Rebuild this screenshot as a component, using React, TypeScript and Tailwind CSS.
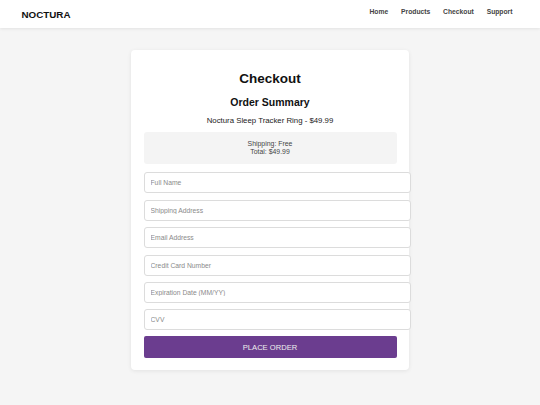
import React from "react";

export default function App() {
  const fields = [
    "Full Name",
    "Shipping Address",
    "Email Address",
    "Credit Card Number",
    "Expiration Date (MM/YY)",
    "CVV",
  ];
  return (
    <div className="min-h-[405px] bg-[#f5f5f5] font-['Liberation_Sans',Arial,sans-serif] text-[#111]">
      <header className="flex h-[28px] items-start justify-between bg-white pl-[21.5px] pr-[27.5px] shadow-[0_1px_3px_rgba(0,0,0,0.08)]">
        <div className="mt-[8.5px] text-[9.8px] font-bold leading-[11px] text-[#111]">NOCTURA</div>
        <nav className="mt-[7.7px] flex gap-[12.8px] text-[6.75px] font-bold leading-[8px] text-[#444]">
          <span>Home</span>
          <span>Products</span>
          <span>Checkout</span>
          <span>Support</span>
        </nav>
      </header>
      <main className="flex justify-center pt-[22px]">
        <div className="w-[278px] rounded-[4px] bg-white px-[12.5px] pb-[12px] pt-[21.3px] shadow-[0_1px_4px_rgba(0,0,0,0.08)]">
          <h1 className="text-center text-[13.5px] font-bold leading-[16px] text-[#111]">Checkout</h1>
          <h2 className="mt-[8.3px] text-center text-[10.5px] font-bold leading-[13px] text-[#111]">Order Summary</h2>
          <p className="mt-[7px] text-center text-[7.8px] leading-[10px] text-[#222]">Noctura Sleep Tracker Ring - $49.99</p>
          <div className="mt-[6.8px] rounded-[3px] bg-[#f4f4f4] py-[7.7px] text-center text-[6.9px] leading-[8px] text-[#444]">
            <div>Shipping: Free</div>
            <div>Total: $49.99</div>
          </div>
          <div className="mt-[8.6px] flex flex-col gap-[6.4px]">
            {fields.map((f) => (
              <input
                key={f}
                placeholder={f}
                className="h-[21px] w-[267px] rounded-[3px] border border-[#dcdcdc] bg-white px-[6px] text-[6.75px] text-[#333] outline-none placeholder:text-[#8a8a8a]"
              />
            ))}
          </div>
          <button className="mt-[6px] flex h-[22px] w-full items-center justify-center rounded-[2px] bg-[#6b3d8f] text-[7.6px] text-[#eee]">
            PLACE ORDER
          </button>
        </div>
      </main>
    </div>
  );
}
